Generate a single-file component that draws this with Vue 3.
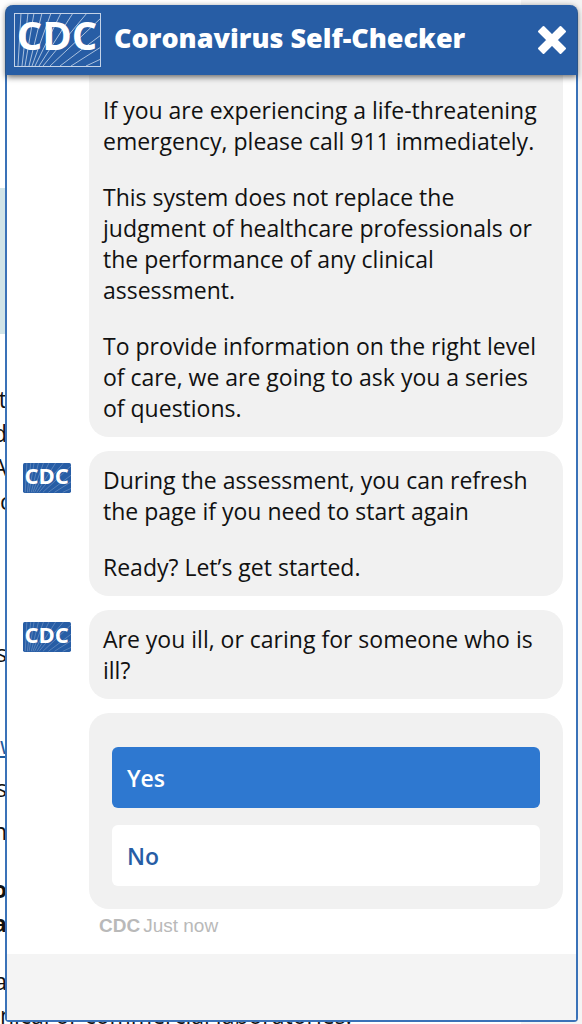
<script setup>
import { ref } from 'vue'

const messages = [
  {
    avatar: false,
    continued: true,
    paragraphs: [
      'If you are experiencing a life-threatening emergency, please call 911 immediately.',
      'This system does not replace the judgment of healthcare professionals or the performance of any clinical assessment.',
      'To provide information on the right level of care, we are going to ask you a series of questions.',
    ],
  },
  {
    avatar: true,
    paragraphs: [
      'During the assessment, you can refresh the page if you need to start again',
      'Ready? Let’s get started.',
    ],
  },
  {
    avatar: true,
    paragraphs: ['Are you ill, or caring for someone who is ill?'],
  },
]

const options = ['Yes', 'No']
const selected = ref('Yes')

// rays of the logo, fanned out from below its left corner
const rays = [
  'M4 53L7 0', 'M8 53L14 0', 'M11 53L20 0', 'M15 53L28 0', 'M18 53L37 0',
  'M21 53L47 0', 'M25 53L59 0', 'M29 53L73 0', 'M36 53L87 5', 'M46 53L87 22',
  'M57 53L87 34', 'M72 53L87 46',
]
</script>

<template>
  <div class="screen">
    <div class="page" aria-hidden="true">
      <div class="page-main">
        <div class="banner"></div>
        <div class="column">
          <p class="end">nt</p>
          <p class="end">d</p>
          <p class="end">A</p>
          <p>c</p>
          <p class="end far">s</p>
          <p class="link"><a href="#" tabindex="-1">w</a></p>
          <p class="end next">s</p>
          <p class="end next">n</p>
          <p class="end para bold">o</p>
          <p class="end bold">a</p>
          <p class="end para">ea</p>
          <p class="last">nical or commercial laboratories.</p>
        </div>
      </div>
      <div class="page-side"></div>
    </div>

    <main class="widget">
      <header class="head">
        <svg class="logo" viewBox="0 0 87 54" role="img" aria-label="CDC">
          <g class="rays"><path v-for="d in rays" :key="d" :d="d" /></g>
          <rect class="frame" x="0.5" y="0.5" width="86" height="53" />
          <text x="43" y="37" text-anchor="middle">CDC</text>
        </svg>
        <h1 class="title">Coronavirus Self-Checker</h1>
        <button class="close" type="button" aria-label="Close">
          <svg viewBox="0 0 30 30">
            <path d="M6.5 2L15 10.5L23.5 2L28 6.5L19.5 15L28 23.5L23.5 28L15 19.5L6.5 28L2 23.5L10.5 15L2 6.5Z" />
          </svg>
        </button>
      </header>

      <section class="chat">
        <div v-for="(m, i) in messages" :key="i" class="message">
          <svg v-if="m.avatar" class="avatar" viewBox="0 0 87 54" role="img" aria-label="CDC">
            <rect class="fill" width="87" height="54" rx="3" />
            <g class="rays"><path v-for="d in rays" :key="d" :d="d" /></g>
            <text x="43" y="37" text-anchor="middle">CDC</text>
          </svg>
          <div class="bubble" :class="{ continued: m.continued }">
            <p v-for="p in m.paragraphs" :key="p">{{ p }}</p>
          </div>
        </div>
        <div class="message">
          <div class="bubble options">
            <button
              v-for="o in options"
              :key="o"
              type="button"
              class="option"
              :class="{ active: o === selected }"
              @click="selected = o"
            >{{ o }}</button>
          </div>
        </div>
        <div class="stamp"><b>CDC</b><span>Just now</span></div>
      </section>

      <footer class="foot"></footer>
    </main>
  </div>
</template>

<style>
body {
  background: #fff;
}
</style>

<style scoped>
.screen {
  position: relative;
  box-sizing: border-box;
  height: 100vh;
  padding: 5px 4px 2px 5px;
  overflow: hidden;
  font-family: 'Open Sans', 'Noto Sans', sans-serif;
  color: #111;
}

/* the page underneath the widget */
.page {
  position: absolute;
  inset: 0;
  display: flex;
  overflow: hidden;
}
.page-main {
  flex: 1;
  min-width: 0;
}
.page-side {
  width: 61px;
  background: #f4f4f4;
}
.banner {
  height: 146px;
  margin-top: 188px;
  background: #d1e4e8;
}
.column {
  display: flex;
  flex-direction: column;
  padding-top: 48px;
  font-size: 23px;
  line-height: 34px;
}
.column p {
  margin: 0;
  white-space: nowrap;
}
.column .end {
  display: flex;
  justify-content: flex-end;
  width: 7px;
}
.column .far {
  margin-top: 118px;
}
.column .link {
  margin-top: 58px;
}
.column .next {
  margin-top: 9px;
}
.column .para {
  margin-top: 24px;
}
.column .bold {
  font-weight: 700;
}
.column a {
  color: #1f5a9e;
}

.widget {
  position: relative;
  box-sizing: border-box;
  height: 100%;
  display: flex;
  flex-direction: column;
  border: 2px solid #3a72b8;
  border-top: 0;
  border-radius: 8px 8px 4px 4px;
  background: #fff;
}

.head {
  position: relative;
  display: flex;
  align-items: center;
  height: 70px;
  margin: 0 -1px;
  padding: 0 10px 0 8px;
  box-sizing: border-box;
  flex: none;
  background: #275da5;
  border-radius: 7px 7px 0 0;
  box-shadow: 0 2px 6px rgba(0, 0, 0, 0.6);
}
.logo {
  width: 87px;
  height: 54px;
}
.logo text,
.avatar text {
  font-family: 'Open Sans', 'Noto Sans', sans-serif;
  font-size: 40px;
  font-weight: 700;
  fill: #fff;
}
.rays {
  fill: none;
  stroke: #a9c0de;
  stroke-width: 1;
}
.avatar .rays {
  stroke: #7f9fcb;
}
.frame {
  fill: none;
  stroke: #c4d3e8;
}
.title {
  flex: 1;
  margin: 0 0 4px 13px;
  font-size: 27px;
  line-height: 36px;
  font-weight: 800;
  color: #fff;
  white-space: nowrap;
}
.close {
  display: flex;
  padding: 0;
  border: 0;
  background: none;
  cursor: pointer;
}
.close svg {
  width: 30px;
  height: 30px;
}
.close path {
  fill: #fff;
  stroke: #fff;
  stroke-width: 2;
  stroke-linejoin: round;
}

.chat {
  flex: 1;
  min-height: 0;
  display: flex;
  flex-direction: column;
  justify-content: flex-end;
  gap: 14px;
  padding: 0 13px 16px 16px;
  overflow: hidden;
}
.message {
  display: grid;
  grid-template-columns: 48px 1fr;
  column-gap: 18px;
  align-items: start;
}
.avatar {
  width: 48px;
  height: 30px;
  margin-top: 12px;
}
.avatar .fill {
  fill: #275da5;
}
.bubble {
  grid-column: 2;
  padding: 14px 14px 13px;
  border-radius: 20px;
  background: #f1f1f1;
  font-size: 23px;
  line-height: 31px;
}
.bubble p {
  margin: 0;
}
.bubble p + p {
  margin-top: 25px;
}
/* scrolled under the header */
.bubble.continued {
  padding-top: 48px;
}
.bubble.options {
  display: flex;
  flex-direction: column;
  gap: 17px;
  padding: 34px 23px 23px;
}
.option {
  height: 61px;
  padding: 0 15px;
  border: 0;
  border-radius: 6px;
  background: #fff;
  color: #275da5;
  font-family: inherit;
  font-size: 23px;
  font-weight: 600;
  text-align: left;
  cursor: pointer;
}
.option.active {
  background: #2e78d0;
  color: #fff;
}
.stamp {
  display: flex;
  gap: 3px;
  margin: -9px 0 0 76px;
  font-family: 'Liberation Sans', Arial, sans-serif;
  font-size: 19px;
  line-height: 24px;
  color: #b9b9b9;
}

.foot {
  flex: none;
  height: 66px;
  background: #f4f4f4;
}
</style>
